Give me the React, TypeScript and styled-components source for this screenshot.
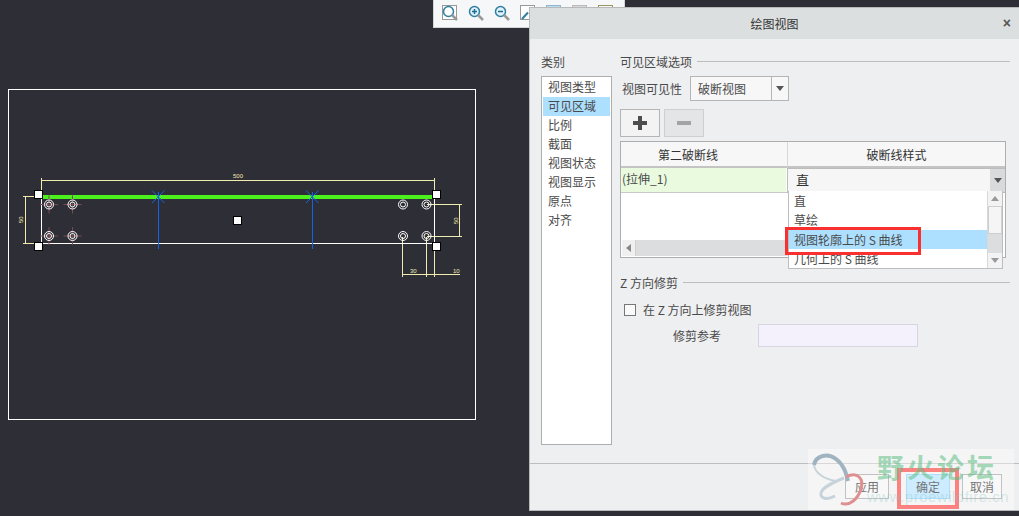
import React from 'react';
import styled, { createGlobalStyle } from 'styled-components';

const categories = ['视图类型', '可见区域', '比例', '截面', '视图状态', '视图显示', '原点', '对齐'];
const styles = ['直', '草绘', '视图轮廓上的 S 曲线', '几何上的 S 曲线'];
const DIM = '#f2ebb0';
const HOLES: [number, number][] = [[49, 204.5], [72.5, 204.5], [49, 236], [72.5, 236], [403, 204.5], [426.5, 204.5], [403, 236], [426.5, 236]];

const GlobalStyle = createGlobalStyle`
  html, body {
    margin: 0;
    padding: 0;
    background: #2e2e36;
  }
  body {
    font-family: "Noto Sans CJK SC", "Liberation Sans", sans-serif;
    font-size: 12px;
    color: #4a4a4a;
  }
`;

const Screen = styled.div`
  position: relative;
  width: 1019px;
  height: 516px;
  overflow: hidden;
  background: #2e2e36;
`;

const Drawing = styled.svg`
  display: block;
`;

const Toolbar = styled.div`
  position: absolute;
  left: 433px;
  top: 0;
  width: 192px;
  height: 28px;
  box-sizing: border-box;
  background: #f6f7f8;
  border: 1px solid #d5d5d5;
  border-top: 0;
  display: flex;
  gap: 8px;
  padding: 3px 0 0 7px;
`;

const Dialog = styled.div`
  position: absolute;
  left: 529px;
  top: 7px;
  width: 490px;
  height: 504px;
  box-sizing: border-box;
  background: #eeeff1;
  border: 1px solid #b9b9b9;
  border-right: 0;
  display: flex;
  flex-direction: column;
`;

const TitleBar = styled.div`
  height: 31px;
  flex: none;
  background: #dcdfdf;
  display: flex;
  align-items: center;
  justify-content: center;
  position: relative;
  color: #333;
`;

const CloseButton = styled.span`
  position: absolute;
  right: 8px;
  top: 7px;
  font: bold 14px "Liberation Sans", sans-serif;
  color: #555;
`;

const Body = styled.div`
  flex: 1;
  display: flex;
  padding: 14px 9px 0 11px;
  gap: 8px;
  min-height: 0;
`;

const Sidebar = styled.div`
  width: 71px;
  flex: none;
  display: flex;
  flex-direction: column;
`;

const Label = styled.div`
  line-height: 17px;
  height: 17px;
  white-space: nowrap;
`;

const CategoryList = styled.div`
  margin-top: 6px;
  height: 369px;
  box-sizing: border-box;
  border: 1px solid #aeaeae;
  background: #fff;
  padding: 1px 1px;
`;

const CategoryItem = styled.div<{ $active?: boolean }>`
  height: 19px;
  line-height: 18px;
  padding-left: 5px;
  background: ${({ $active }) => ($active ? '#addfff' : 'transparent')};
`;

const Main = styled.div`
  flex: 1;
  min-width: 0;
  display: flex;
  flex-direction: column;
`;

const GroupHeader = styled.div`
  display: flex;
  align-items: center;
  gap: 5px;
  height: 17px;
  line-height: 17px;
  white-space: nowrap;
  &::after {
    content: '';
    flex: 1;
    height: 1px;
    background: #bdbdbd;
  }
`;

const VisibilityRow = styled.div`
  display: flex;
  align-items: center;
  margin: 6px 0 0 2px;
  gap: 8px;
`;

const SelectBox = styled.div`
  width: 99px;
  height: 25px;
  box-sizing: border-box;
  border: 1px solid #b5b5b5;
  background: #f7f7f8;
  display: flex;
  align-items: center;
  padding-left: 7px;
  position: relative;
`;

const SelectArrow = styled.span`
  margin-left: auto;
  width: 16px;
  height: 100%;
  border-left: 1px solid #b5b5b5;
  display: flex;
  align-items: center;
  justify-content: center;
  &::after {
    content: '';
    border: 4px solid transparent;
    border-top: 5px solid #555;
    border-bottom: 0;
  }
`;

const ButtonRow = styled.div`
  display: flex;
  gap: 4px;
  margin-top: 8px;
`;

const IconButton = styled.div<{ $disabled?: boolean }>`
  width: 40px;
  height: 28px;
  box-sizing: border-box;
  border: 1px solid ${({ $disabled }) => ($disabled ? '#cfcfcf' : '#b5b5b5')};
  background: ${({ $disabled }) => ($disabled ? '#e4e5e6' : '#f3f3f4')};
  display: flex;
  align-items: center;
  justify-content: center;
`;

const Table = styled.div`
  margin-top: 4px;
  width: 386px;
  height: 117px;
  box-sizing: border-box;
  border: 1px solid #aeaeae;
  background: #fff;
  position: relative;
`;

const TableHeader = styled.div`
  display: grid;
  grid-template-columns: 166px 1fr;
  height: 24px;
  background: #f7f7f8;
  border-bottom: 2px solid #c4c4c4;
  box-sizing: content-box;
  line-height: 25px;
  text-align: center;
  color: #333;
`;

const HeaderCell = styled.div<{ $offset?: number }>`
  padding-right: ${({ $offset }) => $offset ?? 0}px;
  & + & {
    border-left: 1px solid #d8d8d8;
  }
`;

const TableRow = styled.div`
  display: grid;
  grid-template-columns: 166px 1fr;
  height: 24px;
  border-bottom: 1px solid #c9c9c9;
`;

const NameCell = styled.div`
  background: #e9fadf;
  line-height: 21px;
  padding-left: 1px;
  margin-right: 1px;
`;

const StyleCell = styled.div`
  background: #f6f6f7;
  display: flex;
  align-items: center;
  padding: 0 0 2px 8px;
  font-size: 13px;
  color: #333;
  border: 1px solid #bdbdbd;
  border-right: 0;
  margin-bottom: -1px;
`;

const StyleArrow = styled.span`
  margin-left: auto;
  width: 15px;
  height: calc(100% + 2px);
  margin-bottom: -2px;
  background: #d9dadb;
  display: flex;
  align-items: center;
  justify-content: center;
  &::after {
    content: '';
    border: 4px solid transparent;
    border-top: 5px solid #555;
    border-bottom: 0;
  }
`;

const HScroll = styled.div`
  position: absolute;
  left: 1px;
  bottom: 1px;
  width: 166px;
  height: 16px;
  background: #dcdddf;
  display: flex;
  align-items: center;
  &::before {
    content: '';
    width: 13px;
    height: 100%;
    background: #f0f0f1;
    border-right: 1px solid #cfcfcf;
  }
  &::after {
    content: '';
    position: absolute;
    left: 4px;
    border: 4px solid transparent;
    border-right: 5px solid #888;
    border-left: 0;
  }
`;

const Dropdown = styled.div`
  position: absolute;
  left: 167px;
  top: 49px;
  width: 215px;
  height: 78px;
  box-sizing: border-box;
  border: 1px solid #bdbdbd;
  border-top: 0;
  background: #fff;
  display: flex;
`;

const OptionList = styled.div`
  flex: 1;
  overflow: hidden;
`;

const Option = styled.div<{ $active?: boolean }>`
  height: 19.4px;
  line-height: 19px;
  padding-left: 5px;
  white-space: nowrap;
  background: ${({ $active }) => ($active ? '#addfff' : 'transparent')};
`;

const VScroll = styled.div`
  width: 14px;
  flex: none;
  background: #dcdddf;
  display: flex;
  flex-direction: column;
  border-left: 1px solid #d8d8d8;
`;

const ScrollEnd = styled.div<{ $down?: boolean }>`
  height: 15px;
  background: #f3f3f4;
  display: flex;
  align-items: center;
  justify-content: center;
  margin-top: ${({ $down }) => ($down ? 'auto' : '0')};
  &::after {
    content: '';
    border: 4px solid transparent;
    ${({ $down }) =>
      $down ? 'border-top: 5px solid #999; border-bottom: 0;' : 'border-bottom: 5px solid #999; border-top: 0;'}
  }
`;

const ScrollThumb = styled.div`
  height: 28px;
  background: #f5f5f6;
  border: 1px solid #cfcfcf;
  box-sizing: border-box;
`;

const ZSection = styled.div`
  margin-top: 16px;
`;

const CheckRow = styled.div`
  display: flex;
  align-items: center;
  gap: 7px;
  margin: 10px 0 0 4px;
  height: 17px;
`;

const CheckBox = styled.span`
  width: 10px;
  height: 10px;
  border: 1px solid #777;
  background: #fafafa;
`;

const RefRow = styled.div`
  display: flex;
  align-items: center;
  margin: 6px 0 0 53px;
  gap: 37px;
`;

const RefInput = styled.div`
  width: 160px;
  height: 23px;
  box-sizing: border-box;
  background: #f4f0fc;
  border: 1px solid #d8d5e2;
`;

const Footer = styled.div`
  flex: none;
  height: 47px;
  box-sizing: border-box;
  border-top: 1px solid #bdbdbd;
  display: flex;
  justify-content: flex-end;
  padding: 10px 17px 0 0;
  gap: 12px;
`;

const DialogButton = styled.div<{ $primary?: boolean; $narrow?: boolean }>`
  width: ${({ $narrow }) => ($narrow ? '40px' : '44px')};
  height: 25px;
  box-sizing: border-box;
  border: 1px solid ${({ $primary }) => ($primary ? '#7cc6f5' : '#999')};
  background: ${({ $primary }) => ($primary ? '#addfff' : '#f3f3f4')};
  color: #111;
  display: flex;
  align-items: center;
  justify-content: center;
  margin-left: ${({ $primary }) => ($primary ? '5px' : '0')};
`;

const Highlight = styled.div`
  position: absolute;
  box-sizing: border-box;
  border: 3px solid #fa3030;
`;

const StyleHighlight = styled(Highlight)`
  left: 785px;
  top: 227px;
  width: 136px;
  height: 28px;
`;

const ConfirmHighlight = styled(Highlight)`
  left: 897px;
  top: 468px;
  width: 62px;
  height: 41px;
  border-width: 4px;
`;

const Watermark = styled.div`
  position: absolute;
  left: 808px;
  top: 449px;
  width: 206px;
  height: 61px;
  background: rgba(255, 255, 255, 0.4);
  pointer-events: none;
`;

const WatermarkLogo = styled.svg`
  position: absolute;
  left: 0;
  top: 2px;
`;

const WatermarkTitle = styled.div`
  position: absolute;
  left: 69px;
  top: 0;
  font-size: 27px;
  line-height: 36px;
  letter-spacing: 3px;
  font-weight: 700;
  color: rgba(92, 190, 130, 0.55);
  white-space: nowrap;
`;

const WatermarkUrl = styled.div`
  position: absolute;
  left: 59px;
  top: 38px;
  font: 15px/20px "Liberation Sans", sans-serif;
  letter-spacing: 0.5px;
  color: rgba(120, 190, 190, 0.3);
  white-space: nowrap;
`;

const ZoomIcon = ({ sign }: { sign?: '+' | '-' | 'box' }) => (
  <svg width="18" height="20" viewBox="0 0 18 20">
    {sign === 'box' && <rect x="1.5" y="2.5" width="14" height="14" fill="#fff" stroke="#999" />}
    <circle cx="7.5" cy="8.5" r="5" fill={sign === 'box' ? '#fff' : '#dff1fa'} stroke="#2f7f9e" strokeWidth="1.5" />
    <path d="M11 12l5 5" stroke="#999" strokeWidth="2.5" />
    {sign && sign !== 'box' && <path d="M5 8.5h5" stroke="#1c6f92" strokeWidth="1.5" />}
    {sign === '+' && <path d="M7.5 6v5" stroke="#1c6f92" strokeWidth="1.5" />}
  </svg>
);

// only their top edge shows above the dialog
const ViewIcon = ({ fill, stroke, slash }: { fill: string; stroke: string; slash?: boolean }) => (
  <svg width="18" height="20" viewBox="0 0 18 20">
    <rect x="1.5" y="2.5" width="14" height="14" fill={fill} stroke={stroke} />
    {slash && <path d="M3 16L9 9.5" stroke="#2f7f9e" strokeWidth="2" />}
  </svg>
);

const PartDrawing = () => (
  <Drawing width="1019" height="516" viewBox="0 0 1019 516">
    <rect x="8.5" y="89.5" width="467" height="330" fill="none" stroke="#fff" />

    <g stroke={DIM} fill="none">
      <path d="M41.5 178V196M434.5 178V196M41.5 180.5H434.5" />
      <path d="M23 196.5H41M23 243.5H41M25.5 197V243" />
      <path d="M427 204.5H462M427 236.5H462M459.5 205V236" />
      <path d="M402.5 237V277M426.5 237V277M434.5 243V277M403 274.5H460" />
    </g>
    <g fill={DIM} fontFamily="Liberation Sans, sans-serif" fontSize="6">
      <text x="233" y="178">500</text>
      <text x="410" y="273">30</text>
      <text x="453" y="273">10</text>
      <text transform="translate(23 223) rotate(-90)">50</text>
      <text transform="translate(458 224) rotate(-90)">50</text>
    </g>

    <path d="M41.5 196V243.5H434.5V196" fill="none" stroke="#fff" />
    <rect x="41" y="195" width="394" height="4" fill="#4cf01c" />

    {HOLES.slice(0, 4).map(([x, y]) => (
      <path key={`${x}-${y}`} d={`M${x - 9} ${y}H${x + 9}M${x} ${y - 9}V${y + 9}`} stroke="#7b4a55" />
    ))}
    {HOLES.map(([x, y]) => (
      <g key={`${x}:${y}`} fill="none" stroke="#fff">
        <circle cx={x} cy={y} r="4.5" />
        <circle cx={x} cy={y} r="2.5" />
      </g>
    ))}

    {[158, 312].map(x => (
      <path
        key={x}
        d={`M${x + 0.5} 192V249M${x - 6} 190.5L${x + 6.5} 203M${x + 6.5} 190.5L${x - 6} 203`}
        stroke="#1463e6"
        strokeWidth="1"
        fill="none"
      />
    ))}

    {[[34.5, 190.5], [432.5, 190.5], [34.5, 242.5], [432.5, 242.5], [233.5, 216.5]].map(([x, y]) => (
      <rect key={`${x}/${y}`} x={x} y={y} width="8" height="8" fill="#fff" stroke="#000" />
    ))}
  </Drawing>
);

export default function App() {
  return (
    <>
      <GlobalStyle />
      <Screen>
        <PartDrawing />

        <Toolbar>
          <ZoomIcon sign="box" />
          <ZoomIcon sign="+" />
          <ZoomIcon sign="-" />
          <ViewIcon fill="#fff" stroke="#999" slash />
          <ViewIcon fill="#bcdcf0" stroke="#8fb6cc" />
          <ViewIcon fill="#d8d8d8" stroke="#bbb" />
          <ViewIcon fill="#f6f7f8" stroke="#9b9467" />
        </Toolbar>

        <Dialog>
          <TitleBar>
            绘图视图
            <CloseButton>×</CloseButton>
          </TitleBar>

          <Body>
            <Sidebar>
              <Label>类别</Label>
              <CategoryList>
                {categories.map((name, i) => (
                  <CategoryItem key={name} $active={i === 1}>
                    {name}
                  </CategoryItem>
                ))}
              </CategoryList>
            </Sidebar>

            <Main>
              <GroupHeader>可见区域选项</GroupHeader>
              <VisibilityRow>
                视图可见性
                <SelectBox>
                  破断视图
                  <SelectArrow />
                </SelectBox>
              </VisibilityRow>
              <ButtonRow>
                <IconButton>
                  <svg width="16" height="16" viewBox="0 0 16 16">
                    <path d="M6 1h4v5h5v4h-5v5H6v-5H1V6h5z" fill="#4d4d4d" />
                  </svg>
                </IconButton>
                <IconButton $disabled>
                  <svg width="16" height="16" viewBox="0 0 16 16">
                    <path d="M1 6h14v4H1z" fill="#a3a3a3" />
                  </svg>
                </IconButton>
              </ButtonRow>

              <Table>
                <TableHeader>
                  <HeaderCell $offset={32}>第二破断线</HeaderCell>
                  <HeaderCell>破断线样式</HeaderCell>
                </TableHeader>
                <TableRow>
                  <NameCell>(拉伸_1)</NameCell>
                  <StyleCell>
                    直
                    <StyleArrow />
                  </StyleCell>
                </TableRow>
                <HScroll />
                <Dropdown>
                  <OptionList>
                    {styles.map((name, i) => (
                      <Option key={name} $active={i === 2}>
                        {name}
                      </Option>
                    ))}
                  </OptionList>
                  <VScroll>
                    <ScrollEnd />
                    <ScrollThumb />
                    <ScrollEnd $down />
                  </VScroll>
                </Dropdown>
              </Table>

              <ZSection>
                <GroupHeader>Z 方向修剪</GroupHeader>
                <CheckRow>
                  <CheckBox />
                  在 Z 方向上修剪视图
                </CheckRow>
                <RefRow>
                  修剪参考
                  <RefInput />
                </RefRow>
              </ZSection>
            </Main>
          </Body>

          <Footer>
            <DialogButton>应用</DialogButton>
            <DialogButton $primary>确定</DialogButton>
            <DialogButton $narrow>取消</DialogButton>
          </Footer>
        </Dialog>

        <StyleHighlight />
        <ConfirmHighlight />

        <Watermark>
          <WatermarkLogo width="66" height="58" viewBox="0 0 66 58">
            <path d="M6 14C8 4 20 2 28 8s10 14 12 22" fill="none" stroke="#9fb4c0" strokeWidth="4" />
            <path d="M6 14c1 8 10 14 22 16" fill="none" stroke="#c6d3da" strokeWidth="2" />
            <path d="M36 27C26 31 14 36 13 42s6 7 14 3" fill="none" stroke="#c6d3da" strokeWidth="3" />
            <path d="M38 26c12-6 18 2 15 12s-12 18-20 14" fill="none" stroke="#e08f90" strokeWidth="3" />
          </WatermarkLogo>
          <WatermarkTitle>野火论坛</WatermarkTitle>
          <WatermarkUrl>www.proewildfire.cn</WatermarkUrl>
        </Watermark>
      </Screen>
    </>
  );
}
